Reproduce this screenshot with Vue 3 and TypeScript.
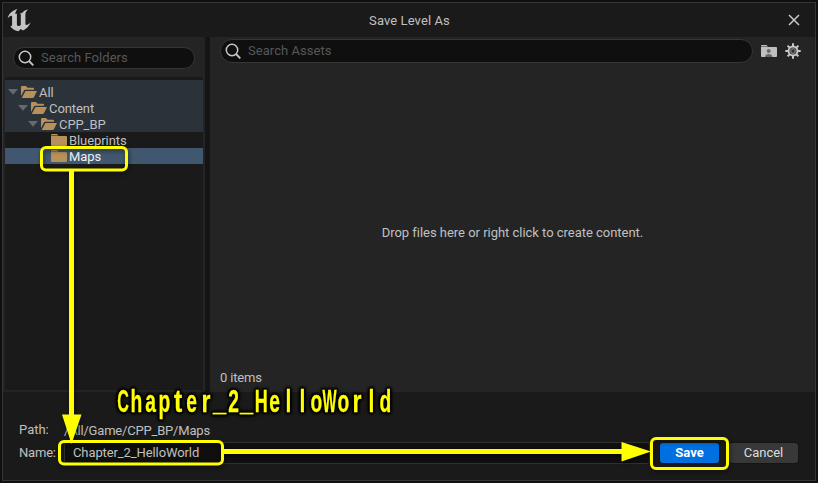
<script setup lang="ts">
interface Folder {
  name: string
  depth: number
  open: boolean
  state: 'ancestor' | 'plain' | 'selected'
}

const folders: Folder[] = [
  { name: 'All', depth: 0, open: true, state: 'ancestor' },
  { name: 'Content', depth: 1, open: true, state: 'ancestor' },
  { name: 'CPP_BP', depth: 2, open: true, state: 'ancestor' },
  { name: 'Blueprints', depth: 3, open: false, state: 'plain' },
  { name: 'Maps', depth: 3, open: false, state: 'selected' },
]

const levelName: string = 'Chapter_2_HelloWorld'

// Horizontal squeeze that fits each glyph in its fixed-width cell
const squeeze: Record<string, number> = { W: 0.48, C: 0.52, H: 0.58, _: 0.76, l: 0.68, r: 0.74, t: 0.8 }
const glyphs = levelName.split('').map((ch) => ({
  ch,
  scale: squeeze[ch] ?? 0.62,
  lift: ch === '_' ? -2 : 0,
}))
</script>

<template>
  <div class="screen">
    <div class="window">
      <header class="titlebar">
        <svg class="logo" width="24" height="24" viewBox="0 0 24 24">
          <path
            fill="#c4c4c4"
            d="M10.6 1C6 2 1.600 5.500 .6 10.600C2 8.800 3.200 7.800 4.200 7.800C4.900 7.800 5.100 8.300 5.100 9.200V16.500C5.100 18 4.300 18.300 3.200 18.100C4.600 20.600 7.200 22.700 11.400 23.200L13.700 21L16 22.500C19.700 20.500 22.500 17.700 23.700 14.200C22 15.900 20.600 16.900 19.400 16.900C18.700 16.900 18.400 16.500 18.400 15.700V6.300C18.400 4.500 19.600 2.800 21 1.300C18.300 2.100 16.300 3.400 14.800 5.200C14.200 4.900 13.600 4.700 12.800 4.700C13.500 5.100 13.800 5.700 13.800 6.600V17.100C13.200 17.700 12.500 18.100 11.700 18.100C10.600 18.100 9.900 17.400 9.900 16V5.700C9.200 5.600 8.700 5.700 8.200 5.900C8.400 4 9.200 2.400 10.600 1Z"
          />
        </svg>
        <span class="title">Save Level As</span>
        <svg class="close" width="12" height="12" viewBox="0 0 12 12">
          <path d="M1 1L11 11M11 1L1 11" stroke="#c8c8c8" stroke-width="1.500" />
        </svg>
      </header>

      <main class="body">
        <aside class="sidebar">
          <div class="search">
            <svg width="17" height="17" viewBox="0 0 17 17">
              <circle cx="7" cy="7" r="5.700" fill="none" stroke="#c8c8c8" stroke-width="1.500" />
              <path d="M11 11L15.300 15.300" stroke="#c8c8c8" stroke-width="1.800" />
            </svg>
            <span>Search Folders</span>
          </div>
          <div class="tree">
            <div
              v-for="f in folders"
              :key="f.name"
              class="row"
              :class="f.state"
              :style="{ paddingLeft: 3 + f.depth * 10 + 'px' }"
            >
              <svg class="chevron" width="10" height="6" viewBox="0 0 10 6">
                <path v-if="f.open" d="M0 0H10L5 5.700Z" fill="#66696c" />
              </svg>
              <svg v-if="f.open" class="folder" width="16" height="12" viewBox="0 0 16 12">
                <path d="M0 1.200Q0 0 1 0H5L6.500 1.700H12Q13 1.700 13 2.700V3.800H4.200Q3.500 3.800 3 4.600L0 10Z" fill="#b8905a" />
                <path d="M4.500 5H16L13 11Q12.600 12 11.600 12H.7Z" fill="#b8905a" />
              </svg>
              <svg v-else class="folder" width="16" height="12" viewBox="0 0 16 12">
                <path d="M0 1Q0 0 1 0H6L7.500 1.400H0Z M0 2H15Q16 2 16 3V11Q16 12 15 12H1Q0 12 0 11Z" fill="#b8905a" />
              </svg>
              <span class="foldername">{{ f.name }}</span>
            </div>
          </div>
        </aside>

        <section class="assets">
          <div class="toolbar">
            <div class="search wide">
              <svg width="17" height="17" viewBox="0 0 17 17">
                <circle cx="7" cy="7" r="5.700" fill="none" stroke="#c8c8c8" stroke-width="1.500" />
                <path d="M11 11L15.300 15.300" stroke="#c8c8c8" stroke-width="1.800" />
              </svg>
              <span>Search Assets</span>
            </div>
            <svg class="userfolder" width="16" height="12" viewBox="0 0 16 12">
              <path d="M0 1Q0 0 1 0H5.500L7 1.400H0Z M0 2H15Q16 2 16 3V11Q16 12 15 12H1Q0 12 0 11Z" fill="#c0c0c0" />
              <circle cx="7.700" cy="6" r="2" fill="#686868" />
              <path d="M4 12Q4.200 9 7.700 9T11.400 12Z" fill="#686868" />
            </svg>
            <svg class="gear" width="16" height="16" viewBox="-8 -8 16 16">
              <path
                d="M0 -7.700V-4M0 4V7.700M-7.700 0H-4M4 0H7.700M-5.400 -5.400L-3 -3M3 3L5.400 5.400M5.400 -5.400L3 -3M-3 3L-5.400 5.400"
                stroke="#c8c8c8"
                stroke-width="2"
              />
              <circle r="4.500" fill="#303030" stroke="#c8c8c8" stroke-width="1.900" />
              <circle r="2.300" fill="#303030" stroke="#7c7c7c" stroke-width="1.300" />
            </svg>
          </div>
          <div class="empty">Drop files here or right click to create content.</div>
          <div class="count">0 items</div>
        </section>
      </main>

      <footer class="footer">
        <div class="line path">
          <span class="label">Path:</span>
          <span class="value">/All/Game/CPP_BP/Maps</span>
        </div>
        <div class="line name">
          <span class="label">Name:</span>
          <div class="input">{{ levelName }}</div>
          <button class="btn primary">Save</button>
          <button class="btn">Cancel</button>
        </div>
      </footer>
    </div>

    <svg class="marks" width="818" height="483" viewBox="0 0 818 483">
      <g fill="none" stroke="#ffff00" stroke-width="3">
        <rect x="41.500" y="147.500" width="85" height="22.500" rx="4.500" />
        <rect x="59.500" y="441.500" width="163" height="22.500" rx="4.500" />
        <rect x="651.500" y="438.500" width="76" height="30" rx="4.500" />
      </g>
      <path d="M69 170H74V414.500H81.500L71.500 444L62 414.500H69Z" fill="#ffff00" />
      <path d="M223 449H621.500V442L651 451.500L621.500 461.500V454H223Z" fill="#ffff00" />
    </svg>
    <div class="caption">
      <span v-for="(g, i) in glyphs" :key="i" class="cell"><span class="glyph" :style="{ transform: `translateY(${g.lift}px) scaleX(${g.scale})` }">{{ g.ch }}</span></span>
    </div>
  </div>
</template>

<style>
body {
  margin: 0;
  background: #111;
}
</style>

<style scoped>
.screen {
  position: relative;
  box-sizing: border-box;
  width: 818px;
  height: 483px;
  padding: 2px;
  background: #101010;
  font: 13px/16px Roboto, sans-serif;
  color: #c0c0c0;
  overflow: hidden;
}
.window {
  box-sizing: border-box;
  width: 814px;
  height: 479px;
  border: 1px solid #363636;
  background: #1a1a1a;
  display: flex;
  flex-direction: column;
}
.titlebar {
  height: 34px;
  flex: none;
  display: grid;
  grid-template-columns: 60px 1fr 60px;
  align-items: center;
}
.logo {
  margin: 0 0 0 4px;
}
.title {
  padding: 2px 0 0 1px;
  text-align: center;
  letter-spacing: 0.1px;
}
.close {
  justify-self: end;
  margin-right: 15px;
}
.body {
  height: 355px;
  flex: none;
  display: flex;
  gap: 5px;
  background: #151515;
}
.sidebar {
  box-sizing: border-box;
  width: 202px;
  padding: 10px 2px 2px;
  background: #242424;
  display: flex;
  flex-direction: column;
}
.search {
  box-sizing: border-box;
  height: 22px;
  margin: 0 8px;
  padding-left: 4px;
  border: 1px solid #363636;
  border-radius: 11px;
  background: #0f0f0f;
  color: #575757;
  display: flex;
  align-items: center;
  gap: 6px;
  letter-spacing: 0.05px;
}
.tree {
  flex: 1;
  margin-top: 8px;
  border-top: 3px solid #1a1a1a;
  background: #1a1a1a;
}
.row {
  height: 16px;
  display: flex;
  align-items: center;
  letter-spacing: -0.08px;
}
.row:first-child {
  border-top: 4px solid #2b323a;
}
.ancestor {
  background: #2b323a;
}
.selected {
  background: #40576f;
  color: #f2f2f2;
}
.chevron {
  margin: 0 3px 1px 0;
}
.folder {
  margin-right: 2px;
}
.foldername {
  padding-top: 2px;
}
.assets {
  flex: 1;
  background: #242424;
  display: flex;
  flex-direction: column;
}
.toolbar {
  display: flex;
  align-items: center;
  padding: 2px 14px 0 10px;
}
.wide {
  flex: 1;
  height: 24px;
  margin: 0;
  border-radius: 12px;
}
.userfolder {
  margin: 0 8px 0 8px;
}
.empty {
  flex: 1;
  display: flex;
  align-items: center;
  justify-content: center;
  padding-top: 32px;
  letter-spacing: -0.025px;
}
.count {
  padding: 0 10px 6px;
  letter-spacing: -0.15px;
}
.footer {
  flex: 1;
  padding: 30px 17px 0 16px;
}
.line {
  display: flex;
  align-items: center;
}
.label {
  width: 45px;
}
.value {
  padding-top: 2px;
  letter-spacing: -0.19px;
}
.path {
  height: 16px;
}
.name {
  margin-top: 4px;
  height: 22px;
}
.input {
  box-sizing: border-box;
  width: 586px;
  height: 22px;
  padding-left: 8px;
  border: 1px solid #303030;
  border-radius: 3px;
  background: #0f0f0f;
  line-height: 20px;
  letter-spacing: -0.1px;
}
.name .label {
  letter-spacing: -0.2px;
}
.btn {
  width: 69px;
  height: 20px;
  padding: 0;
  border: 0;
  border-radius: 3px;
  background: #383838;
  color: #ddd;
  font: inherit;
  box-shadow: 0 0 1px 1px #161616;
}
.primary {
  width: 59px;
  margin: 0 10px;
  background: #0070e0;
  color: #fff;
  font-weight: 700;
}
.marks {
  position: absolute;
  left: 0;
  top: 0;
  filter: drop-shadow(1px 2px 2px rgba(0, 0, 0, 0.5));
}
.caption {
  position: absolute;
  left: 116px;
  top: 385px;
  display: flex;
  height: 34px;
  font: 700 31px/34px 'Liberation Sans', sans-serif;
  color: #ffff00;
  -webkit-text-stroke: 0.3px #ffff00;
  filter: drop-shadow(0 0 1px #000) drop-shadow(0 0 1px #000) drop-shadow(0 0 1px #000) drop-shadow(0 0 1px #000);
}
.cell {
  width: 13.8px;
  display: flex;
  justify-content: center;
}
.glyph {
  flex: none;
}
</style>
